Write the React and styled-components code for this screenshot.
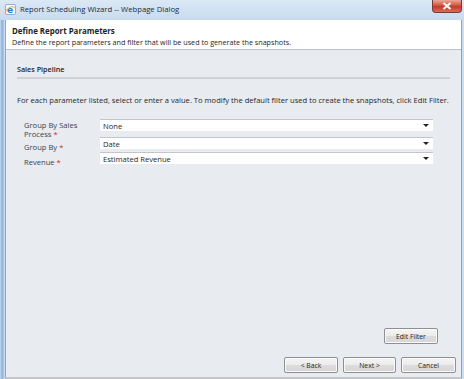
import React from "react";
import styled, { createGlobalStyle } from "styled-components";

const GlobalStyle = createGlobalStyle`
  html, body {
    margin: 0;
    padding: 0;
    overflow: hidden;
    background: #c3d6ea;
  }
`;

const params = [
  { label: ["Group By Sales", "Process"], value: "None", tall: true },
  { label: ["Group By"], value: "Date" },
  { label: ["Revenue"], value: "Estimated Revenue" },
];

function App() {
  return (
    <>
      <GlobalStyle />
      <WindowStyled>
        <TitleBar>
          <IeIcon viewBox="0 0 12 12">
            <rect x="0.5" y="0.5" width="11" height="11" rx="1.5" fill="#f4f7fb" stroke="#8aa3c4" />
            <text x="2.2" y="9.6" fontSize="10" fontFamily="DejaVu Sans, sans-serif" fontWeight="bold" fill="#2a78d0">
              e
            </text>
            <path d="M1.5 7.5 C 3 3, 9 2, 10.5 4" fill="none" stroke="#e8a21c" strokeWidth="1" />
          </IeIcon>
          <Title>Report Scheduling Wizard -- Webpage Dialog</Title>
          <CloseButton>
            <svg width="10" height="8" viewBox="0 0 10 8">
              <path d="M1.5 1 L8.5 7 M8.5 1 L1.5 7" stroke="#fff" strokeWidth="2" />
            </svg>
          </CloseButton>
        </TitleBar>
        <Client>
          <Header>
            <HeaderTitle>Define Report Parameters</HeaderTitle>
            <HeaderText>
              Define the report parameters and filter that will be used to generate the snapshots.
            </HeaderText>
          </Header>
          <Body>
            <SectionTitle>Sales Pipeline</SectionTitle>
            <Intro>
              For each parameter listed, select or enter a value. To modify the default filter used to
              create the snapshots, click Edit Filter.
            </Intro>
            <ParamList>
              {params.map((p) => (
                <ParamRow key={p.value} $tall={p.tall}>
                  <ParamLabel $tall={p.tall}>
                    {p.label.map((line, i) => (
                      <span key={line}>
                        {line}
                        {i === p.label.length - 1 && <Req>*</Req>}
                      </span>
                    ))}
                  </ParamLabel>
                  <Select>
                    <span>{p.value}</span>
                    <Arrow />
                  </Select>
                </ParamRow>
              ))}
            </ParamList>
            <Spacer />
            <FilterRow>
              <Button $w={54}>Edit Filter</Button>
            </FilterRow>
          </Body>
          <Footer>
            <Button $w={54}>&lt; Back</Button>
            <Button $w={53}>Next &gt;</Button>
            <Button $w={55}>Cancel</Button>
          </Footer>
        </Client>
      </WindowStyled>
    </>
  );
}

const WindowStyled = styled.div`
  width: 464px;
  height: 379px;
  display: flex;
  flex-direction: column;
  background: linear-gradient(90deg, #d5e4f4 0, #9fbfe4 1px, #8fb2de 3px, #c6daf0 4px) left / 5px 100% no-repeat,
    linear-gradient(90deg, #c8dbef, #b7cfea 60%, #cbddf0);
  font-family: "Open Sans", "DejaVu Sans", sans-serif;
  color: #1e1e1e;
`;

const TitleBar = styled.div`
  height: 20px;
  display: flex;
  align-items: flex-start;
  padding-left: 5px;
  background: linear-gradient(180deg, #dbe8f5 0%, #c8dbef 100%);
`;

const IeIcon = styled.svg`
  width: 11px;
  height: 11px;
  margin-top: 4px;
`;

const Title = styled.div`
  font-size: 7.7px;
  line-height: 20px;
  margin-left: 4px;
  color: #1c2a3a;
  margin-top: -1px;
`;

const CloseButton = styled.div`
  margin-left: auto;
  margin-right: 2px;
  width: 30px;
  height: 13px;
  border-radius: 0 0 4px 4px;
  background: linear-gradient(180deg, #e8a89a 0%, #d4553f 45%, #c13a26 55%, #d8705a 100%);
  border: 1px solid #7a3a30;
  border-top: none;
  box-sizing: border-box;
  display: flex;
  align-items: center;
  justify-content: center;
`;

const Client = styled.div`
  flex: 1;
  margin: 0 2px 0 5px;
  border-left: 1px solid #9aa7b6;
  border-right: 1px solid #8fa2b8;
  border-bottom: 2px solid #c4c6ca;
  display: flex;
  flex-direction: column;
  background: #e8ebf0;
`;

const Header = styled.div`
  height: 30px;
  background: #fff;
  border-bottom: 1px solid #b9c3cf;
  padding: 6px 0 0 6px;
  box-sizing: border-box;
`;

const HeaderTitle = styled.div`
  font-size: 7.9px;
  font-weight: bold;
  line-height: 11px;
`;

const HeaderText = styled.div`
  font-size: 7.2px;
  line-height: 11px;
`;

const Body = styled.div`
  flex: 1;
  display: flex;
  flex-direction: column;
  padding: 14px 10px 0 11px;
`;

const SectionTitle = styled.div`
  font-size: 7.2px;
  font-weight: 600;
  line-height: 10px;
  padding-bottom: 3px;
  border-bottom: 2px solid #cfd3d8;
  margin-right: 1px;
`;

const Intro = styled.div`
  font-size: 7.6px;
  line-height: 10px;
  margin-top: 16px;
  white-space: nowrap;
`;

const ParamList = styled.div`
  display: flex;
  flex-direction: column;
  gap: 3px;
  margin-top: 14px;
  padding-left: 7px;
`;

const ParamRow = styled.div`
  display: grid;
  grid-template-columns: 76px 333px;
  align-items: start;
  height: ${(p) => (p.$tall ? "15px" : "12px")};
`;

const ParamLabel = styled.div`
  font-size: 7.6px;
  line-height: 9px;
  color: #3a4350;
  display: flex;
  flex-direction: column;
  margin-top: ${(p) => (p.$tall ? "2px" : "6px")};
`;

const Req = styled.span`
  color: #d0271d;
  margin-left: 2px;
`;

const Select = styled.div`
  height: 12px;
  box-sizing: border-box;
  background: #fff;
  border-top: 1px solid #c2c6cc;
  display: flex;
  align-items: center;
  justify-content: space-between;
  padding: 0 4px 0 3px;
  font-size: 7.6px;
  color: #1e1e1e;
`;

const Arrow = styled.span`
  width: 0;
  height: 0;
  border-left: 3px solid transparent;
  border-right: 3px solid transparent;
  border-top: 3px solid #222;
`;

const Spacer = styled.div`
  flex: 1;
`;

const FilterRow = styled.div`
  display: flex;
  justify-content: flex-end;
  padding-right: 13px;
  margin-bottom: 13px;
`;

const Footer = styled.div`
  display: flex;
  justify-content: flex-end;
  gap: 5px;
  padding: 0 5px 4px 0;
`;

const Button = styled.button`
  width: ${(p) => p.$w}px;
  height: 16px;
  padding: 0;
  font-family: inherit;
  font-size: 6.8px;
  color: #1e1e1e;
  border: 1px solid #8c8f94;
  border-radius: 2px;
  background: linear-gradient(180deg, #f4f4f4 0%, #ececec 48%, #dcdcdc 52%, #d6d6d6 100%);
  box-shadow: inset 0 0 0 1px #fbfbfb;
`;

export default App;
